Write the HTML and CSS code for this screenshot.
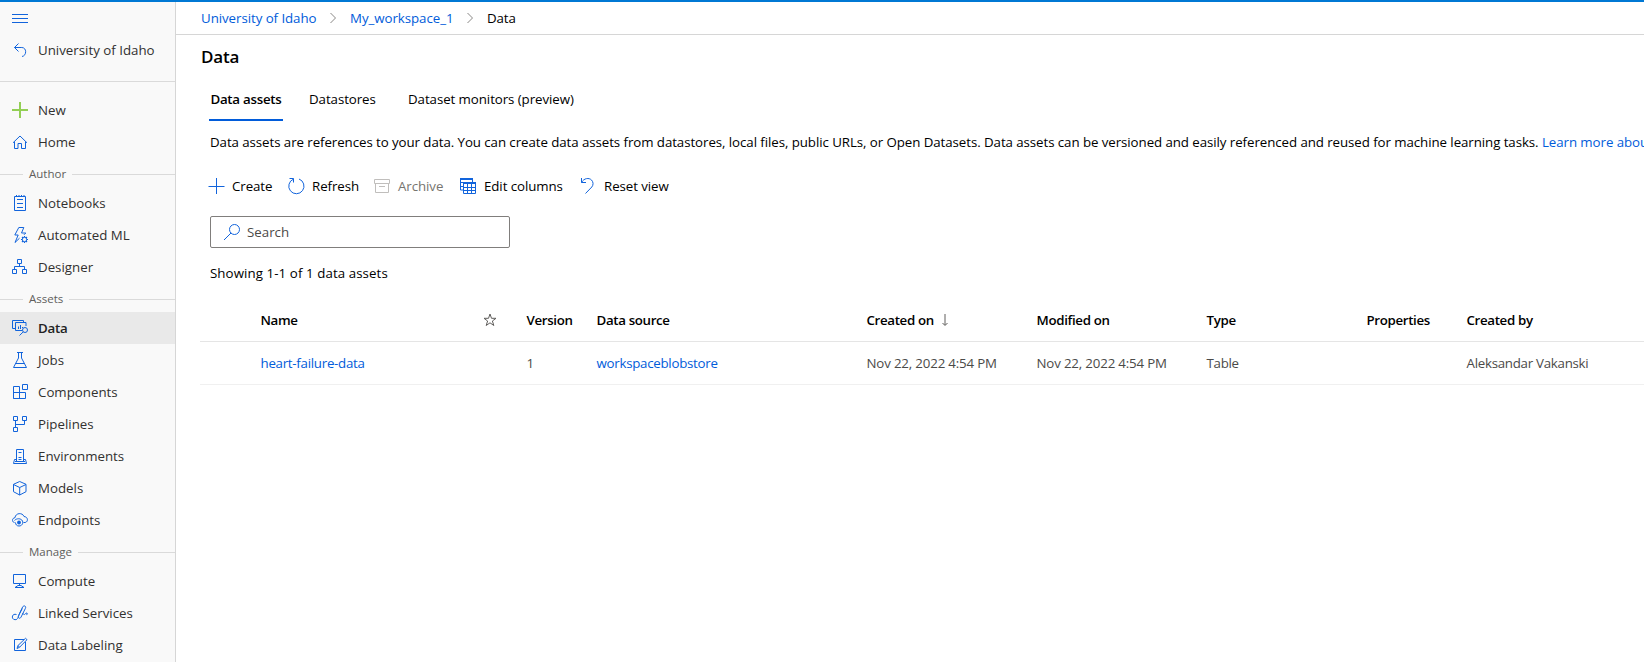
FILE: index.html
```
<!DOCTYPE html>
<html lang="en">
<head>
<meta charset="utf-8">
<title>Data</title>
<link rel="stylesheet" href="styles.css">
</head>
<body>
<div class="app">
  <nav class="sidebar">
    <a class="menu"><svg class="icon" viewBox="0 0 20 20"><path d="M2 6.500h16M2 10.500h16M2 14.500h16"/></svg></a>
    <a class="item back"><svg class="icon" viewBox="0 0 20 20"><path d="M8.500 3.500l-4 4 4 4M4.500 7.500h7.300c5 0 5.200 8.200 .2 9"/></svg><span>University of Idaho</span></a>
    <div class="rule"></div>
    <a class="item"><svg class="icon plus" viewBox="0 0 20 20"><path d="M10 2v16M2 10h16"/></svg><span>New</span></a>
    <a class="item"><svg class="icon" viewBox="0 0 20 20"><path d="M3 10.800L10 4l7 6.800M4.500 9.800v6.700h3.500v-5h3.500v5h4V9.800"/></svg><span>Home</span></a>
    <div class="section"><span>Author</span></div>
    <a class="item"><svg class="icon" viewBox="0 0 20 20"><path d="M4.500 3.500h11v14h-11zM6.500 2v2M9 2v2M11.500 2v2M14 2v2M7 6.500h6M7 10.500h6M7 14.500h6"/></svg><span>Notebooks</span></a>
    <a class="item"><svg class="icon" viewBox="0 0 20 20"><path d="M8.800 2.500h5l-2.300 5.500h4.300l-1.800 1.800M8.800 2.500L4.800 10h3.400L5 17.500l4.500-4.300"/><circle cx="14.500" cy="14.500" r="2.200"/><path class="teeth" d="M14.500 11v1.300M14.500 16.700V18M11 14.500h1.300M16.700 14.500H18M12 12l1 1M16 16l1 1M17 12l-1 1M13 16l-1 1"/></svg><span>Automated ML</span></a>
    <a class="item"><svg class="icon" viewBox="0 0 20 20"><path d="M7.500 2.500h4v4h-4zM2.500 12.500h4v4h-4zM12.500 12.500h4v4h-4zM9.500 6.500v3M4.500 12.500v-3h10v3"/></svg><span>Designer</span></a>
    <div class="section"><span>Assets</span></div>
    <a class="item selected"><svg class="icon" viewBox="0 0 20 20"><path d="M5 10.500H2.500v-8h11v2M12 12.500H5.500v-8h10.500V8M8.500 8.500v2.500M10.500 7v4M12.500 9v1"/><circle cx="15" cy="12" r="2.500"/><path d="M13.300 13.800L9.500 17.500"/></svg><span>Data</span></a>
    <a class="item"><svg class="icon" viewBox="0 0 20 20"><path d="M7 2.500h6M8.500 2.500v5.500l-5 9.500h13l-5-9.500V2.500M5.500 13.500h9"/></svg><span>Jobs</span></a>
    <a class="item"><svg class="icon" viewBox="0 0 20 20"><path d="M3.500 4.500h6v12h-6zM3.500 10.500h12v6h-12M12.500 2.500h5v5h-5z"/></svg><span>Components</span></a>
    <a class="item"><svg class="icon" viewBox="0 0 20 20"><path d="M3.500 2.500h4v4h-4zM12.500 2.500h4v4h-4zM3.500 13.500h4v4h-4zM5.500 6.500v7M5.500 10.500h9v-4"/></svg><span>Pipelines</span></a>
    <a class="item"><svg class="icon" viewBox="0 0 20 20"><path d="M6.500 15.500v-12h7v12M8.500 6.500h3M8.500 11.500h3M8.500 13.500h3M6.500 13.500h-2l-1 4h13l-1-4h-2M5 15.500h10"/></svg><span>Environments</span></a>
    <a class="item"><svg class="icon" viewBox="0 0 20 20"><path d="M9.700 3.500l6.300 2.800v7.400l-6.300 3.300-6.200-3.300V6.300zM3.500 6.500l6.200 3 6.300-3M9.700 9.500V17"/></svg><span>Models</span></a>
    <a class="item"><svg class="icon" viewBox="0 0 20 20"><path d="M4.500 12.500H4C1.800 11.500 2 8 5 7.700c.5-5 7.500-5.400 9-1.200 4 .2 4.600 5.200 1.200 6h-1.700"/><path d="M4.500 10.500c2-2.300 6.500-2.500 8 .5 1 2.600-.8 5-3.500 5-2.200 0-3.500-1.500-3.500-3.500"/><circle class="dot" cx="9" cy="12.500" r="1.900"/></svg><span>Endpoints</span></a>
    <div class="section"><span>Manage</span></div>
    <a class="item"><svg class="icon" viewBox="0 0 20 20"><path d="M3.500 3.500h12v9h-12zM9.500 12.500v2M8 14.500h3l3 2H5z"/></svg><span>Compute</span></a>
    <a class="item"><svg class="icon" viewBox="0 0 20 20"><path d="M6.500 11.500c-5-1.500-5.500 5-1.500 5.200 3.500.2 3.200-3.700 4.500-6.200L12.600 4c1.400-2.200 3.900-.8 2.800 1.400L11 14.200c-1.300 2.200-3.500.6-2.500-1.400L12.300 5.500M12.500 10c1 2 2.500 2 3.500 0 1.800-.2 2 1.500.4 1.700"/></svg><span>Linked Services</span></a>
    <a class="item"><svg class="icon" viewBox="0 0 20 20"><path d="M14 4.500H4.500v11h11V7M7 13.500l1-3L15.500 3.300l1.500 1.400-7.500 7.600zM8 10.500l1.500 1.800"/></svg><span>Data Labeling</span></a>
  </nav>
  <main class="main">
    <header class="crumbs">
      <a>University of Idaho</a>
      <svg class="chev" viewBox="0 0 8 12"><path d="M1.500 1l5 5-5 5"/></svg>
      <a>My_workspace_1</a>
      <svg class="chev" viewBox="0 0 8 12"><path d="M1.500 1l5 5-5 5"/></svg>
      <span>Data</span>
    </header>
    <h1>Data</h1>
    <div class="tabs">
      <a class="tab active">Data assets</a>
      <a class="tab stores">Datastores</a>
      <a class="tab">Dataset monitors (preview)</a>
    </div>
    <p class="intro">Data assets are references to your data. You can create data assets from datastores, local files, public URLs, or Open Datasets. Data assets can be versioned and easily referenced and reused for machine learning tasks. <a>Learn more abou</a></p>
    <div class="toolbar">
      <button><svg viewBox="0 0 18 18"><path d="M8.500 1v16M.5 9.500h16"/></svg>Create</button>
      <button><svg viewBox="0 0 18 18"><path d="M11 2a7.600 7.600 0 1 1-5.500.1M1.500 1.500h4v4"/></svg>Refresh</button>
      <button class="off"><svg viewBox="0 0 18 18"><path d="M.5 2.500h15v4H.5zM1.500 6.500v9h13v-9M5 9.500h6"/></svg>Archive</button>
      <button class="columns"><svg viewBox="0 0 18 18"><path class="bar" d="M1 2h13M4 6h13"/><path d="M1.500 2v11H4M1.500 5.500H4M1.500 9.500H4M13.500 2v4M4.500 6v10.500h12V6M4.500 10.500h12M4.500 13.500h12M8.500 7v9.500M12.500 7v9.500"/></svg>Edit columns</button>
      <button><svg viewBox="0 0 18 18"><path d="M1.500 1v4.500H6M1.500 5.500C4 1 9 .5 11.500 3c2 2 2 5 .3 7L5.500 16.500"/></svg>Reset view</button>
    </div>
    <div class="search"><svg viewBox="0 0 18 18"><circle cx="11.500" cy="6.500" r="5"/><path d="M8 10L1 17"/></svg><span>Search</span></div>
    <div class="count">Showing 1-1 of 1 data assets</div>
    <div class="table">
      <div class="row head">
        <span>Name</span>
        <svg class="star" viewBox="0 0 14 14"><path d="M7 1l1.500 4.300H13L9.400 8l1.400 4.500L7 9.800l-3.800 2.700L4.600 8 1 5.300h4.500z"/></svg>
        <span>Version</span><span>Data source</span>
        <span class="sorted">Created on<svg viewBox="0 0 8 14"><path d="M4 1v11M1.500 10L4 12.500 6.500 10"/></svg></span>
        <span>Modified on</span><span>Type</span><span>Properties</span><span>Created by</span>
      </div>
      <div class="row">
        <a>heart-failure-data</a><span></span><span>1</span><a>workspaceblobstore</a>
        <span class="date">Nov 22, 2022 4:54 PM</span><span class="date">Nov 22, 2022 4:54 PM</span><span>Table</span><span></span><span>Aleksandar Vakanski</span>
      </div>
    </div>
  </main>
</div>
</body>
</html>
```
FILE: styles.css
```
* { box-sizing: border-box; }
body { margin: 0; overflow: hidden; background: #fff; color: #000; font: 13.3px/20px "Open Sans", "Noto Sans", sans-serif; }
svg { fill: none; stroke: #1264dc; stroke-width: 1; flex: none; }
a { color: #015cda; text-decoration: none; }
.app { display: flex; height: 662px; border-top: 2px solid #0078d4; }

.sidebar { width: 176px; flex: none; background: #f9f9f9; border-right: 1px solid #d6d6d6; }
.icon { width: 20px; height: 20px; }
.menu { display: flex; height: 32px; padding: 6px 0 0 10px; }
.item { display: flex; align-items: center; height: 32px; padding-left: 10px; gap: 8px; color: #323130; }
.rule { height: 1px; margin: 15px 0 12px; background: #dadada; }
.plus { stroke: #93cf55; stroke-width: 2; }
.teeth { stroke-width: 1.2; }
.dot { fill: #1264dc; stroke: none; }
.section { display: flex; align-items: center; gap: 6px; height: 29px; padding-top: 3px; font-size: 11.5px; color: #605e5c; }
.section::before, .section::after { content: ""; height: 1px; background: #dadada; }
.section::before { width: 23px; }
.section::after { flex: 1; }
.selected { background: #e9e9e9; font-weight: 600; color: #222; letter-spacing: -.2px; }

.main { flex: 1; min-width: 0; }
.crumbs { display: flex; align-items: center; height: 33px; padding-left: 25px; border-bottom: 1px solid #d6d6d6; letter-spacing: -.06px; }
.chev { width: 8px; height: 12px; margin: 0 12.500px 0 13px; stroke: #8a8886; }
h1 { margin: 11px 0 0 25px; font-size: 17px; line-height: 22px; font-weight: 600; letter-spacing: -.2px; }
.tabs { display: flex; height: 42px; margin: 11px 0 0 33px; }
.tab { color: #000; padding-top: 10px; white-space: nowrap; letter-spacing: -.07px; }
.active { width: 74px; margin-right: 26px; text-align: center; font-weight: 600; border-bottom: 2px solid #015cda; letter-spacing: -.25px; }
.stores { width: 99px; }
.intro { margin: 11px 0 0 34px; white-space: nowrap; letter-spacing: -.071px; }
.toolbar { display: grid; grid-template-columns: 80px 86px 86px 120px 110px; height: 24px; margin: 22px 0 0 32px; }
.toolbar button { display: flex; align-items: center; gap: 6px; padding: 0; border: 0; background: none; color: #000; font: inherit; letter-spacing: -.08px; white-space: nowrap; }
.toolbar svg { width: 18px; height: 18px; }
.toolbar .off { color: #76746f; }
.off svg { stroke: #c0bebc; }
.toolbar .columns { margin-left: -1px; gap: 7px; }
.bar { stroke-width: 2; }
.search { display: flex; align-items: center; gap: 6px; width: 300px; height: 32px; margin: 18px 0 0 34px; padding-left: 12px; border: 1px solid #807e7c; border-radius: 2px; color: #4c4a48; }
.search svg { width: 18px; height: 18px; }
.count { margin: 15px 0 0 34px; letter-spacing: .08px; }
.table { margin: 15px 0 0 24px; }
.row { display: grid; grid-template-columns: 222px 44px 70px 270px 170px 170px 160px 100px 1fr; align-items: center; height: 43px; padding-left: 60.5px; border-bottom: 1px solid #f0f0f0; color: #4b4a48; letter-spacing: -.27px; white-space: nowrap; }
.date { letter-spacing: -.17px; }
.head { height: 44px; font-weight: 600; color: #000; border-bottom-color: #e5e5e5; letter-spacing: -.34px; }
.star { width: 14px; height: 14px; stroke: #605e5c; }
.sorted { display: flex; align-items: center; gap: 7px; }
.sorted svg { width: 8px; height: 14px; stroke: #605e5c; }
```
